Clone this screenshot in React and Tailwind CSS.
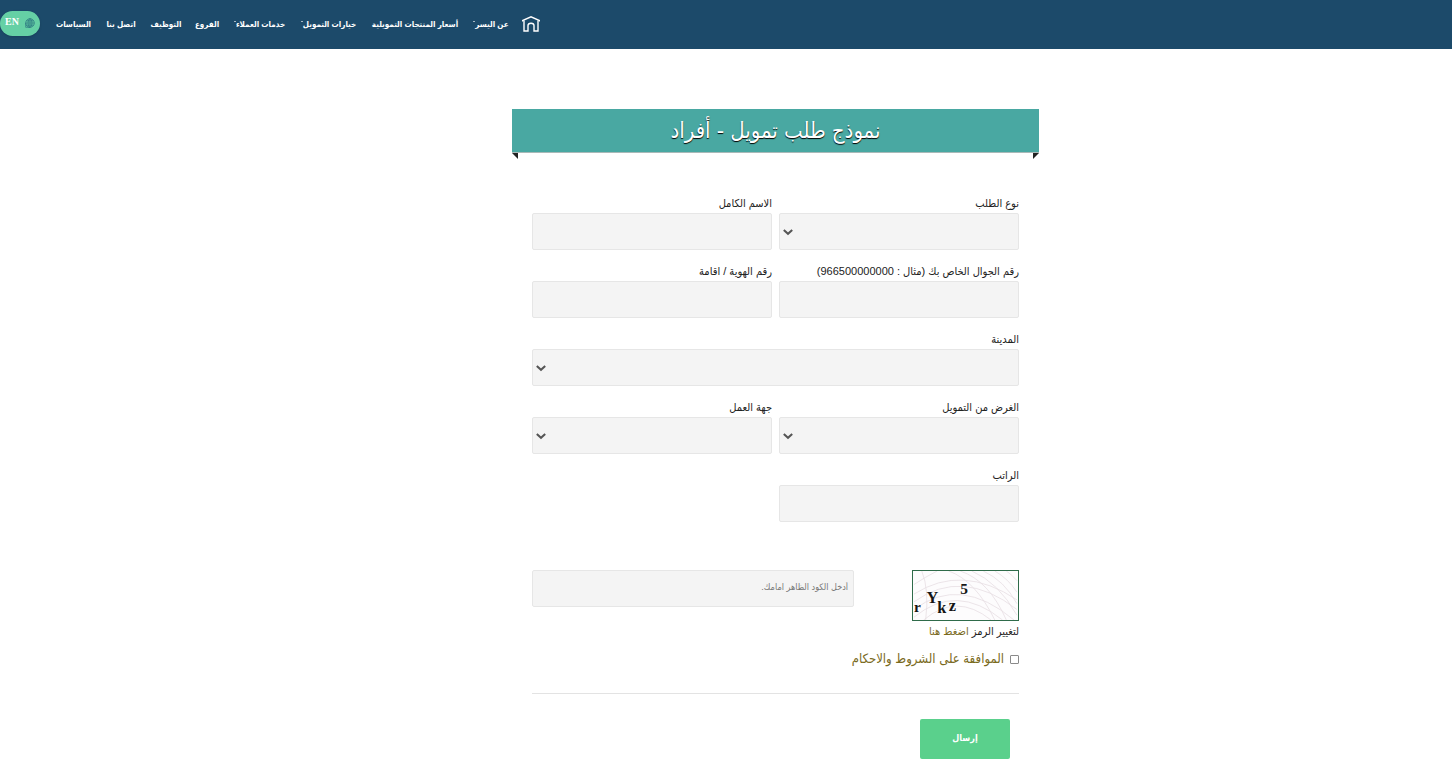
import { useState } from "react";

const NAV_ITEMS = [
  { label: "عن اليسر", menu: true, width: "w-[34px]" },
  { label: "أسعار المنتجات التمويلية", width: "w-[90px]" },
  { label: "خيارات التمويل", menu: true, width: "w-[55px]" },
  { label: "خدمات العملاء", menu: true, width: "w-[55px]" },
  { label: "الفروع", width: "w-[22px]" },
  { label: "التوظيف", width: "w-[32px]" },
  { label: "اتصل بنا", width: "w-[30px]" },
  { label: "السياسات", width: "w-[37px]" },
];

const FIELD_CLASS =
  "block w-full appearance-none rounded-xs border border-[#e6e6e6] bg-[#f4f4f4] px-1 text-[11px] text-[#333] outline-none focus:border-[#49a8a2]";

function HomeIcon() {
  return (
    <svg width="18" height="16" viewBox="0 0 18 16" fill="none" stroke="white" strokeWidth="1.4">
      <path d="M0.5 5.4 V4.6 L9 0.8 L17.5 4.6 V5.4" />
      <path d="M2 4.6 V15 H6 V9.5 Q6 7.2 9 7.2 Q12 7.2 12 9.5 V15 H16 V4.6" />
    </svg>
  );
}

function GlobeIcon() {
  return (
    <svg width="10" height="10" viewBox="0 0 10 10" fill="none" stroke="#2b7580" strokeWidth="0.7">
      <circle cx="5" cy="5" r="4.3" />
      <ellipse cx="5" cy="5" rx="2" ry="4.3" />
      <path d="M5 0.7 V9.3 M0.7 5 H9.3 M1.4 2.9 H8.6 M1.4 7.1 H8.6" />
      <path d="M0.7 5 V9.3 H5" />
    </svg>
  );
}

function Header() {
  return (
    <header className="flex h-[49px] items-center justify-end bg-[#1c4a6a] text-white">
      <nav className="flex items-center gap-[14px] pl-[15px]">
        <a href="#home" aria-label="الرئيسية" className="-mt-[2px]">
          <HomeIcon />
        </a>
        {NAV_ITEMS.map((item) => (
          <a
            key={item.label}
            href="#menu"
            className={`flex justify-center pt-px text-[8px] leading-4 font-bold whitespace-nowrap ${item.width}`}
          >
            {item.label}
            {item.menu && <span className="mt-1 h-px w-[2px] shrink-0 bg-white/60" />}
          </a>
        ))}
      </nav>
      <a
        href="#en"
        className="-mt-[3px] flex h-[25px] w-10 items-center justify-center gap-[6px] rounded-full bg-[#65d0a5] shadow-sm"
      >
        <GlobeIcon />
        <span className="pb-[3px] font-['Liberation_Serif',serif] text-[10px] leading-3 font-bold">EN</span>
      </a>
    </header>
  );
}

function FormTitle() {
  return (
    <div>
      <h1 className="h-11 border-b border-[#a9b9b8] bg-[#49a8a2] text-center text-[22px] leading-[44px] text-white [text-shadow:0_1px_1px_#000]">
        نموذج طلب تمويل - أفراد
      </h1>
      <div className="flex justify-between">
        <svg width="6" height="6" viewBox="0 0 6 6">
          <path d="M0 0 H6 L0 6 Z" fill="#222" />
        </svg>
        <svg width="6" height="6" viewBox="0 0 6 6">
          <path d="M0 0 H6 V6 Z" fill="#222" />
        </svg>
      </div>
    </div>
  );
}

function Field({ id, label, type = "text", wide = false }) {
  return (
    <div className={wide ? "col-span-2" : ""}>
      <label htmlFor={id} className="block h-[18px] text-[11px] leading-4 whitespace-nowrap text-[#222]">
        {label}
      </label>
      {type === "select" ? (
        <div className="relative">
          <select id={id} name={id} className={`h-[37px] ${FIELD_CLASS}`}>
            <option value=""></option>
          </select>
          <svg
            className="pointer-events-none absolute top-4 left-1"
            width="10"
            height="7"
            viewBox="0 0 10 7"
            fill="none"
            stroke="#555"
            strokeWidth="2"
          >
            <path d="M0.8 0.9 L5 4.8 L9.2 0.9" />
          </svg>
        </div>
      ) : (
        <input id={id} name={id} type={type} className={`h-[37px] ${FIELD_CLASS}`} />
      )}
    </div>
  );
}

function Captcha() {
  return (
    <svg
      width="107"
      height="51"
      viewBox="0 0 107 51"
      className="block border border-[#2f6b4a] bg-[#fdfcfd]"
      role="img"
      aria-label="captcha"
    >
      <g fill="none" stroke="#e6dde2" strokeWidth="0.8">
        <path d="M0 14 Q12 6 24 0" />
        <path d="M0 24 Q50 -8 107 30" />
        <path d="M0 32 Q50 -4 107 40" />
        <path d="M0 40 Q48 4 104 51" />
        <path d="M0 48 Q44 12 92 51" />
        <path d="M10 51 Q44 22 80 51" />
        <path d="M8 0 Q16 20 12 51" />
        <path d="M36 0 Q64 10 84 51" />
        <path d="M48 0 Q78 10 96 51" />
        <path d="M60 0 Q88 12 107 46" />
        <path d="M72 0 Q94 10 107 34" />
        <path d="M84 0 Q98 8 107 22" />
        <path d="M96 0 Q102 4 107 10" />
      </g>
      <g fill="#151515" fontFamily="'Liberation Serif', serif" fontWeight="bold" direction="ltr">
        <text x="0" y="43" fontSize="16">r</text>
        <text x="13" y="33" fontSize="17">Y</text>
        <text x="24" y="44" fontSize="17">k</text>
        <text x="36" y="42" fontSize="17">z</text>
        <text x="48" y="24" fontSize="16">5</text>
      </g>
    </svg>
  );
}

export default function App() {
  const [agreed, setAgreed] = useState(false);

  return (
    <div
      dir="rtl"
      className="min-h-screen bg-white font-['Liberation_Sans','DejaVu_Sans_Condensed','DejaVu_Sans',sans-serif]"
    >
      <Header />

      <main className="pt-[60px] pb-[9px] pl-[99px]">
        <div className="mx-auto max-w-[527px]">
          <FormTitle />

          <form className="px-5 pt-9" onSubmit={(e) => e.preventDefault()}>
            <div className="grid grid-cols-2 gap-x-[7px] gap-y-[13px]">
              <Field id="request_type" label="نوع الطلب" type="select" />
              <Field id="full_name" label="الاسم الكامل" />
              <Field id="mobile" label="رقم الجوال الخاص بك (مثال : 966500000000)" type="tel" />
              <Field id="national_id" label="رقم الهوية / اقامة" />
              <Field id="city" label="المدينة" type="select" wide />
              <Field id="purpose" label="الغرض من التمويل" type="select" />
              <Field id="employer" label="جهة العمل" type="select" />
              <Field id="salary" label="الراتب" />
            </div>

            <div className="mt-12 flex items-start justify-between">
              <div>
                <Captcha />
                <p className="text-[11px] leading-5 whitespace-nowrap text-[#222]">
                  لتغيير الرمز{" "}
                  <a href="#refresh" className="text-[#7a6a1c]">
                    اضغط هنا
                  </a>
                </p>
              </div>
              <input
                type="text"
                name="captcha"
                aria-label="أدخل الكود الظاهر امامك"
                placeholder="أدخل الكود الظاهر امامك."
                className="h-[37px] w-[322px] rounded-xs border border-[#e6e6e6] bg-[#f4f4f4] px-[5px] pb-1 text-[9px] outline-none placeholder:text-[#777]"
              />
            </div>

            <label className="mt-2 flex items-center gap-[6px] text-[13px] leading-5 text-[#7a6a1c]">
              <input
                type="checkbox"
                checked={agreed}
                onChange={(e) => setAgreed(e.target.checked)}
                className="size-[9px] appearance-none rounded-[1px] border border-[#8a8a8a] bg-white checked:bg-[#49a8a2]"
              />
              الموافقة على الشروط والاحكام
            </label>

            <hr className="mt-6 border-[#e3e3e3]" />

            <button
              type="submit"
              className="mt-[25px] mr-[9px] block h-10 w-[90px] rounded-xs bg-[#5ad08c] text-[9px] font-bold text-white"
            >
              إرسال
            </button>
          </form>
        </div>
      </main>
    </div>
  );
}
